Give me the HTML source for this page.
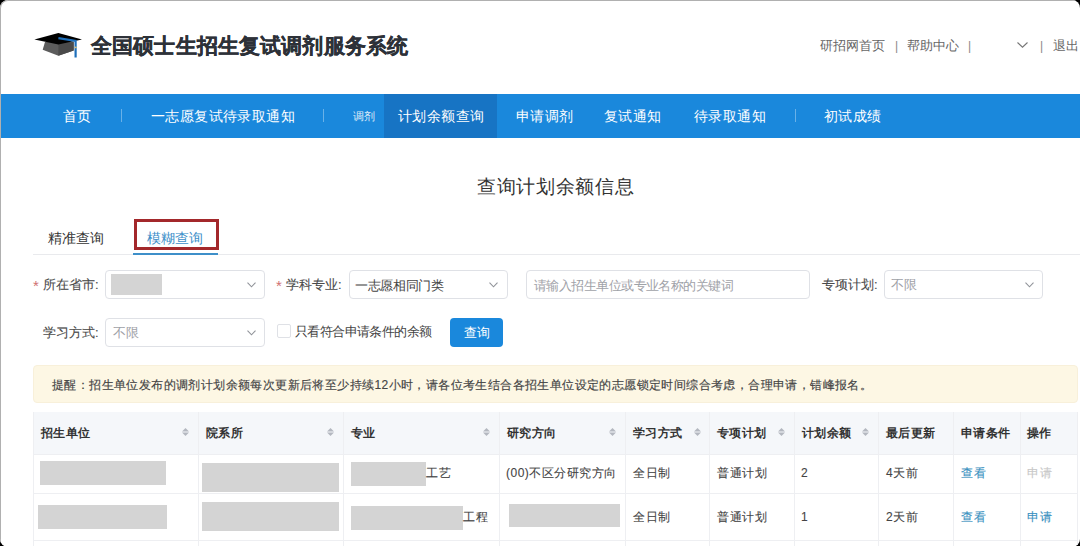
<!DOCTYPE html>
<html><head><meta charset="utf-8">
<style>
*{margin:0;padding:0;box-sizing:border-box}
html,body{width:1080px;height:546px;overflow:hidden;background:#000}
body{font-family:"Liberation Sans",sans-serif;color:#333}
#frame{position:absolute;left:0;top:0;width:1080px;height:547px;background:#fff;border-radius:8px;overflow:hidden}
#bd{position:absolute;left:0;top:0;width:1100px;height:570px;border-top:1px solid #b0b0b0;border-left:1px solid #b0b0b0;border-radius:8px}
.a{position:absolute;white-space:nowrap;line-height:1}
.nav{position:absolute;left:0;top:94px;width:1080px;height:44px;background:#1a88dc}
.nav .it{position:absolute;top:0;height:44px;line-height:44px;color:#fff;font-size:14px;letter-spacing:0.4px;white-space:nowrap}
.nav .sep{position:absolute;top:15px;width:1px;height:13px;background:rgba(255,255,255,.35)}
.nav .act{position:absolute;left:384px;top:0;width:113px;height:44px;background:#1774c4}
.lbl{font-size:13px;color:#4a4a4a;-webkit-text-stroke:0.1px #4a4a4a}
.sel{position:absolute;height:29px;border:1px solid #dfe1e6;border-radius:4px;background:#fff}
.chev{position:absolute;width:6px;height:6px;border-right:1px solid #888;border-bottom:1px solid #888;transform:rotate(45deg)}
.ph{color:#9fa2a8;font-size:13px}
.th{position:absolute;font-size:12px;letter-spacing:0.33px;font-weight:bold;color:#333;white-space:nowrap;line-height:1}
.td{position:absolute;font-size:12px;letter-spacing:0.5px;color:#444;-webkit-text-stroke:0.1px currentColor;white-space:nowrap;line-height:1}
.gr{position:absolute;background:#d4d4d4}
.vl{position:absolute;width:1px;background:#eeeff2}
.hl{position:absolute;height:1px;background:#eeeff2}
.sort{position:absolute;width:7px;height:8px}
</style></head><body>
<div id="frame">
  <!-- header -->
  <svg class="a" style="left:33px;top:32px" width="52" height="27" viewBox="0 0 52 27">
    <polygon points="12,10 40.7,10 40.7,18.5 25.4,23.8 9.7,17.8" fill="#5c5c5c"/>
    <polygon points="25.4,12 40.7,10 40.7,18.5 25.4,23.8" fill="#4a4a4a"/>
    <polygon points="1.4,7.4 25.4,1 49,7.4 25.4,12.6" fill="#000"/>
    <polyline points="25.4,6.2 42.6,8.9 42.6,25.6" fill="none" stroke="#1e6fba" stroke-width="2.2"/>
    <rect x="41.6" y="14.6" width="2" height="1.6" fill="#d8c27a"/>
  </svg>
  <div class="a" style="left:91px;top:35px;font-size:21px;letter-spacing:0.14px;font-weight:bold;-webkit-text-stroke:0.3px #2d3138;color:#2d3138">全国硕士生招生复试调剂服务系统</div>
  <div class="a" style="left:820px;top:40px;font-size:12.6px;color:#666">研招网首页</div>
  <div class="a" style="left:895px;top:40px;font-size:12px;color:#888">|</div>
  <div class="a" style="left:906.5px;top:40px;font-size:12.6px;color:#666">帮助中心</div>
  <div class="a" style="left:968px;top:40px;font-size:12px;color:#888">|</div>
  <svg class="a" style="left:1017px;top:42px" width="11" height="6" viewBox="0 0 11 6"><polyline points="0.5,0.5 5.5,5.2 10.5,0.5" fill="none" stroke="#777" stroke-width="1.1"/></svg>
  <div class="a" style="left:1040px;top:40px;font-size:12px;color:#888">|</div>
  <div class="a" style="left:1053px;top:40px;font-size:12.6px;color:#666">退出</div>

  <!-- nav -->
  <div class="nav">
    <div class="act"></div>
    <div class="it" style="left:63px">首页</div>
    <div class="sep" style="left:121px"></div>
    <div class="it" style="left:151px">一志愿复试待录取通知</div>
    <div class="sep" style="left:323px"></div>
    <div class="it" style="left:353px;font-size:11px;letter-spacing:0;opacity:.85">调剂</div>
    <div class="it" style="left:398px">计划余额查询</div>
    <div class="it" style="left:516px">申请调剂</div>
    <div class="it" style="left:604px">复试通知</div>
    <div class="it" style="left:694px">待录取通知</div>
    <div class="sep" style="left:795px"></div>
    <div class="it" style="left:824px">初试成绩</div>
  </div>

  <!-- title -->
  <div class="a" style="left:477px;top:177px;font-size:19px;letter-spacing:0.7px;color:#333">查询计划余额信息</div>

  <!-- tabs -->
  <div class="hl" style="left:33px;top:254px;width:1047px;background:#e9eaed"></div>
  <div class="a" style="left:48px;top:231px;font-size:14px;color:#333">精准查询</div>
  <div class="a" style="left:147px;top:231px;font-size:14px;color:#3d8fc9">模糊查询</div>
  <div class="a" style="left:133px;top:253px;width:85px;height:2px;background:#3d8fc9"></div>
  <div class="a" style="left:134px;top:219px;width:85px;height:31px;border:3px solid #a3282b"></div>

  <!-- form row 1 -->
  <div class="a" style="left:33px;top:278px;font-size:15px;color:#d07070">*</div>
  <div class="a lbl" style="left:43px;top:278px">所在省市:</div>
  <div class="sel" style="left:105px;top:270px;width:160px"></div>
  <div class="gr" style="left:111px;top:274px;width:51px;height:21px"></div>
  <svg class="a" style="left:247px;top:282px" width="9" height="6" viewBox="0 0 9 6"><polyline points="0.5,0.7 4.5,4.8 8.5,0.7" fill="none" stroke="#909399" stroke-width="1.1"/></svg>

  <div class="a" style="left:276px;top:278px;font-size:15px;color:#d07070">*</div>
  <div class="a lbl" style="left:286px;top:278px">学科专业:</div>
  <div class="sel" style="left:349px;top:270px;width:159px"></div>
  <div class="a" style="left:355px;top:279px;font-size:13px;letter-spacing:-0.33px;color:#444">一志愿相同门类</div>
  <svg class="a" style="left:489px;top:282px" width="9" height="6" viewBox="0 0 9 6"><polyline points="0.5,0.7 4.5,4.8 8.5,0.7" fill="none" stroke="#909399" stroke-width="1.1"/></svg>

  <div class="sel" style="left:526px;top:270px;width:284px"></div>
  <div class="a ph" style="left:534px;top:279px;letter-spacing:-0.56px">请输入招生单位或专业名称的关键词</div>

  <div class="a lbl" style="left:822px;top:278px">专项计划:</div>
  <div class="sel" style="left:884px;top:270px;width:159px"></div>
  <div class="a ph" style="left:891px;top:278px">不限</div>
  <svg class="a" style="left:1025px;top:282px" width="9" height="6" viewBox="0 0 9 6"><polyline points="0.5,0.7 4.5,4.8 8.5,0.7" fill="none" stroke="#909399" stroke-width="1.1"/></svg>

  <!-- form row 2 -->
  <div class="a lbl" style="left:43px;top:326px">学习方式:</div>
  <div class="sel" style="left:105px;top:318px;width:160px"></div>
  <div class="a ph" style="left:113px;top:326px">不限</div>
  <svg class="a" style="left:247px;top:330px" width="9" height="6" viewBox="0 0 9 6"><polyline points="0.5,0.7 4.5,4.8 8.5,0.7" fill="none" stroke="#909399" stroke-width="1.1"/></svg>

  <div class="a" style="left:277px;top:324px;width:14px;height:14px;border:1px solid #dfe1e6;border-radius:2px"></div>
  <div class="a" style="left:295px;top:325px;font-size:13px;letter-spacing:-0.6px;color:#444">只看符合申请条件的余额</div>
  <div class="a" style="left:450px;top:318px;width:53px;height:29px;background:#1a88dc;border-radius:4px;color:#fff;font-size:13px;line-height:29px;text-align:center">查询</div>

  <!-- notice -->
  <div class="a" style="left:33px;top:365px;width:1045px;height:38px;background:#fdf7e4;border:1px solid #f8f0da;border-radius:4px"></div>
  <div class="a" style="left:52px;top:379px;font-size:12px;letter-spacing:0.4px;color:#444;-webkit-text-stroke:0.15px #444">提醒：招生单位发布的调剂计划余额每次更新后将至少持续12小时，请各位考生结合各招生单位设定的志愿锁定时间综合考虑，合理申请，错峰报名。</div>

  <!-- table -->
  <div class="a" style="left:33px;top:412px;width:1045px;height:42px;background:#f5f7fa"></div>
  <div class="hl" style="left:33px;top:454px;width:1045px"></div>
  <div class="hl" style="left:33px;top:493px;width:1045px"></div>
  <div class="hl" style="left:33px;top:540px;width:1045px"></div>
  <div class="vl" style="left:33px;top:412px;height:134px"></div>
  <div class="vl" style="left:198px;top:412px;height:134px"></div>
  <div class="vl" style="left:343px;top:412px;height:134px"></div>
  <div class="vl" style="left:499px;top:412px;height:134px"></div>
  <div class="vl" style="left:625px;top:412px;height:134px"></div>
  <div class="vl" style="left:709px;top:412px;height:134px"></div>
  <div class="vl" style="left:794px;top:412px;height:134px"></div>
  <div class="vl" style="left:878px;top:412px;height:134px"></div>
  <div class="vl" style="left:953px;top:412px;height:134px"></div>
  <div class="vl" style="left:1020px;top:412px;height:134px"></div>
  <div class="vl" style="left:1077px;top:412px;height:134px"></div>

  <div class="th" style="left:41px;top:427px">招生单位</div>
  <div class="th" style="left:206px;top:427px">院系所</div>
  <div class="th" style="left:351px;top:427px">专业</div>
  <div class="th" style="left:507px;top:427px">研究方向</div>
  <div class="th" style="left:633px;top:427px">学习方式</div>
  <div class="th" style="left:717px;top:427px">专项计划</div>
  <div class="th" style="left:802px;top:427px">计划余额</div>
  <div class="th" style="left:886px;top:427px">最后更新</div>
  <div class="th" style="left:961px;top:427px">申请条件</div>
  <div class="th" style="left:1027px;top:427px">操作</div>

  <svg class="sort" style="left:182px;top:428px" viewBox="0 0 7 8"><polygon points="3.5,0 7,3.6 0,3.6" fill="#b4b8c0"/><polygon points="0,4.5 7,4.5 3.5,8" fill="#b4b8c0"/></svg>
  <svg class="sort" style="left:327px;top:428px" viewBox="0 0 7 8"><polygon points="3.5,0 7,3.6 0,3.6" fill="#b4b8c0"/><polygon points="0,4.5 7,4.5 3.5,8" fill="#b4b8c0"/></svg>
  <svg class="sort" style="left:483px;top:428px" viewBox="0 0 7 8"><polygon points="3.5,0 7,3.6 0,3.6" fill="#b4b8c0"/><polygon points="0,4.5 7,4.5 3.5,8" fill="#b4b8c0"/></svg>
  <svg class="sort" style="left:609px;top:428px" viewBox="0 0 7 8"><polygon points="3.5,0 7,3.6 0,3.6" fill="#b4b8c0"/><polygon points="0,4.5 7,4.5 3.5,8" fill="#b4b8c0"/></svg>
  <svg class="sort" style="left:694px;top:428px" viewBox="0 0 7 8"><polygon points="3.5,0 7,3.6 0,3.6" fill="#b4b8c0"/><polygon points="0,4.5 7,4.5 3.5,8" fill="#b4b8c0"/></svg>
  <svg class="sort" style="left:778px;top:428px" viewBox="0 0 7 8"><polygon points="3.5,0 7,3.6 0,3.6" fill="#b4b8c0"/><polygon points="0,4.5 7,4.5 3.5,8" fill="#b4b8c0"/></svg>
  <svg class="sort" style="left:862px;top:428px" viewBox="0 0 7 8"><polygon points="3.5,0 7,3.6 0,3.6" fill="#b4b8c0"/><polygon points="0,4.5 7,4.5 3.5,8" fill="#b4b8c0"/></svg>

  <!-- row 1 -->
  <div class="gr" style="left:40px;top:461px;width:126px;height:24px"></div>
  <div class="gr" style="left:202px;top:463px;width:137px;height:29px"></div>
  <div class="gr" style="left:351px;top:462px;width:75px;height:24px"></div>
  <div class="td" style="left:426px;top:467px">工艺</div>
  <div class="td" style="left:506px;top:467px">(00)不区分研究方向</div>
  <div class="td" style="left:633px;top:467px">全日制</div>
  <div class="td" style="left:717px;top:467px">普通计划</div>
  <div class="td" style="left:801px;top:467px">2</div>
  <div class="td" style="left:886px;top:467px">4天前</div>
  <div class="td" style="left:961px;top:467px;color:#3890c0">查看</div>
  <div class="td" style="left:1027px;top:467px;color:#c8c8c8">申请</div>

  <!-- row 2 -->
  <div class="gr" style="left:38px;top:505px;width:129px;height:24px"></div>
  <div class="gr" style="left:202px;top:502px;width:137px;height:29px"></div>
  <div class="gr" style="left:351px;top:506px;width:112px;height:24px"></div>
  <div class="td" style="left:463px;top:511px">工程</div>
  <div class="gr" style="left:509px;top:504px;width:111px;height:23px"></div>
  <div class="td" style="left:633px;top:511px">全日制</div>
  <div class="td" style="left:717px;top:511px">普通计划</div>
  <div class="td" style="left:801px;top:511px">1</div>
  <div class="td" style="left:886px;top:511px">2天前</div>
  <div class="td" style="left:961px;top:511px;color:#3890c0">查看</div>
  <div class="td" style="left:1027px;top:511px;color:#3890c0">申请</div>
  <div id="bd"></div>
</div>
</body></html>
